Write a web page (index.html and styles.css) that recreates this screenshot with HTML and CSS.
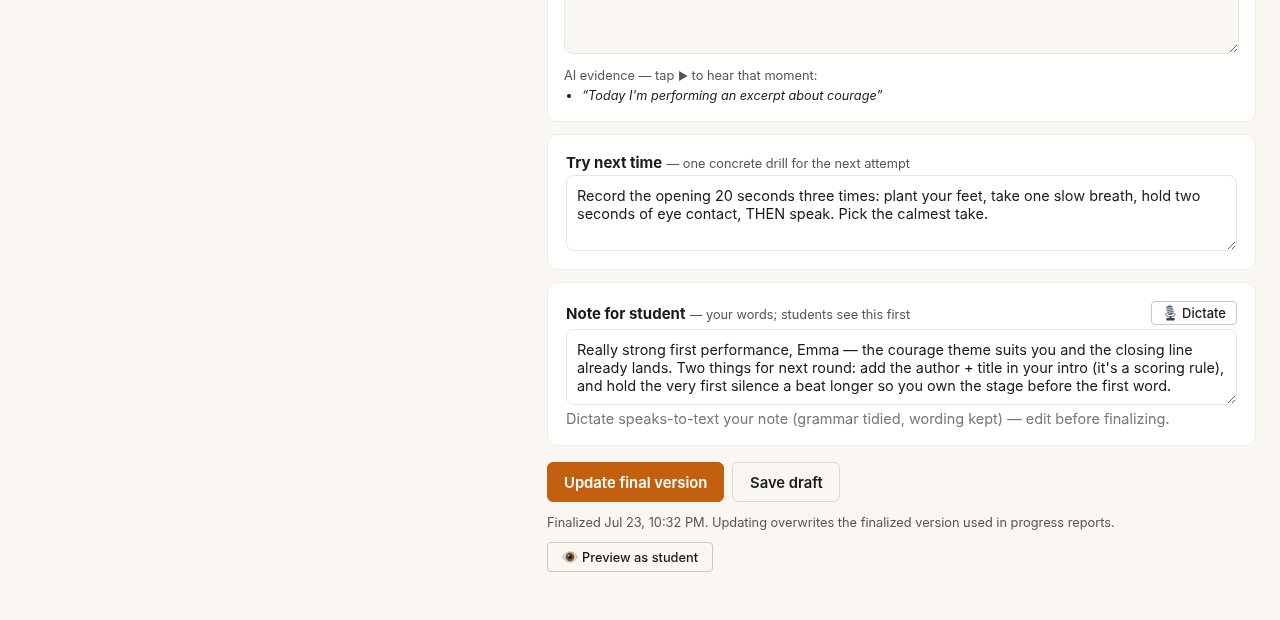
FILE: index.html
```html
<!DOCTYPE html>
<html>
<head>
<meta charset="UTF-8">
<title>Review</title>
<link rel="stylesheet" href="styles.css">
</head>
<body>
	<div class="page">
		<div class="card first">
			<textarea class="box locked"></textarea>
			<div class="evidence">AI evidence — tap <span class="play">▶</span> to hear that moment:</div>
			<ul class="quotes">
				<li>“Today I'm performing an excerpt about courage”</li>
			</ul>
		</div>

		<div class="card">
			<div class="head"><span><b>Try next time</b> <span class="sub">— one concrete drill for the next attempt</span></span></div>
			<textarea class="box tall">Record the opening 20 seconds three times: plant your feet, take one slow breath, hold two seconds of eye contact, THEN speak. Pick the calmest take.</textarea>
		</div>

		<div class="card">
			<div class="head note">
				<span><b>Note for student</b> <span class="sub">— your words; students see this first</span></span>
				<button class="small">
					<svg class="icon" viewBox="0 0 14 17" width="13" height="16"><g transform="rotate(-12 7 8)"><rect x="3.500" y="0.500" width="7" height="10" rx="2.800" fill="#59636e"/><path d="M3.500 2.800h7M3.500 4.600h7M3.500 6.400h7M3.500 8.200h7" stroke="#d5dade" stroke-width="0.8"/></g><path d="M2 8.500c0 2.800 2 4.200 5 4.200s5-1.400 5-4.200" fill="none" stroke="#8a9096" stroke-width="1.300"/><rect x="6" y="12" width="2" height="2.500" fill="#4a4f55"/><rect x="2.500" y="14" width="9" height="2.500" rx="0.800" fill="#3a3f45"/></svg>
					Dictate
				</button>
			</div>
			<textarea class="box">Really strong first performance, Emma — the courage theme suits you and the closing line already lands. Two things for next round: add the author + title in your intro (it's a scoring rule), and hold the very first silence a beat longer so you own the stage before the first word.</textarea>
			<div class="hint">Dictate speaks-to-text your note (grammar tidied, wording kept) — edit before finalizing.</div>
		</div>

		<div class="actions">
			<button class="primary">Update final version</button>
			<button class="secondary">Save draft</button>
		</div>
		<div class="status">Finalized Jul 23, 10:32 PM. Updating overwrites the finalized version used in progress reports.</div>
		<button class="small preview">
			<svg class="icon" viewBox="0 0 16 12" width="16" height="12"><path d="M0.500 6C2.500 2.300 5 0.800 8 0.800s5.500 1.500 7.500 5.200c-2 3.700-4.500 5.200-7.500 5.200S2.500 9.700 0.500 6z" fill="#ded9d2" stroke="#9a948c" stroke-width="0.500"/><circle cx="8" cy="6" r="4.400" fill="#84552f"/><circle cx="8" cy="6" r="2.300" fill="#2a1c14"/><circle cx="6.800" cy="4.800" r="0.700" fill="#f2ece4"/></svg>
			Preview as student
		</button>
	</div>
</body>
</html>
```

FILE: styles.css
```css
*{
	box-sizing: border-box;
}
html, body{
	height: 100%;
}
body{
	margin: 0;
	overflow: hidden;
	background: #faf7f2;
	font-family: Inter, "Noto Sans", sans-serif;
	color: #1a1a1a;
}
.page{
	width: 709px;
	margin-left: 547px;
	margin-top: -61px;
}
.card{
	background: #fff;
	border: 1px solid #efeae2;
	border-radius: 10px;
	padding: 18px;
	margin-bottom: 12px;
}
.card.first{
	padding: 16px;
}
.head{
	display: flex;
	justify-content: space-between;
	align-items: flex-end;
	margin-bottom: 1px;
	height: 21px;
	font-size: 15px;
	line-height: 20px;
}
.head.note{
	height: 24px;
	margin-bottom: 4px;
}
.head b{
	font-weight: 700;
}
.sub{
	font-size: 12.75px;
	color: #555;
}
.box{
	display: block;
	width: 100%;
	height: 76px;
	padding: 11px 10px 10px;
	border: 1px solid #ebe6dc;
	border-radius: 8px;
	background: #fff;
	font-family: Inter, "Noto Sans", sans-serif;
	font-size: 14.48px;
	line-height: 18px;
	color: #1a1a1a;
}
.box.locked{
	height: 98px;
	background: #faf7f2;
}
.evidence{
	margin-top: 13px;
	font-size: 12.8px;
	line-height: 18px;
	color: #555;
}
.play{
	font-size: 11px;
}
.quotes{
	margin: 2px 0 0;
	padding-left: 18px;
	font-size: 12.7px;
	font-style: italic;
	line-height: 18px;
}
.hint{
	margin-top: 6px;
	font-size: 14.48px;
	line-height: 16px;
	color: #777;
}
.actions{
	display: flex;
	gap: 8px;
	margin-top: 16px;
}
button{
	font-family: Inter, "Noto Sans", sans-serif;
	cursor: pointer;
}
.primary, .secondary{
	height: 40px;
	padding: 1px 16px 0;
	border-radius: 6px;
	font-size: 14.8px;
	font-weight: 600;
}
.primary{
	background: #c2600f;
	border: 1px solid #c2600f;
	color: #fff;
}
.secondary{
	width: 108px;
	background: #faf7f2;
	border: 1px solid #e0d8c9;
	color: #1a1a1a;
}
.status{
	margin-top: 12px;
	font-size: 12.8px;
	line-height: 18px;
	color: #555;
}
.small{
	display: inline-flex;
	align-items: center;
	gap: 5px;
	height: 24px;
	padding: 0 10px 0 12px;
	background: #fff;
	border: 1px solid #cfc8ba;
	border-radius: 4px;
	font-size: 13px;
	font-weight: 500;
	color: #1a1a1a;
}
.preview{
	gap: 4px;
	height: 30px;
	margin-top: 10px;
	padding: 0 14px;
	background: #faf7f2;
	font-size: 12.8px;
}
```
